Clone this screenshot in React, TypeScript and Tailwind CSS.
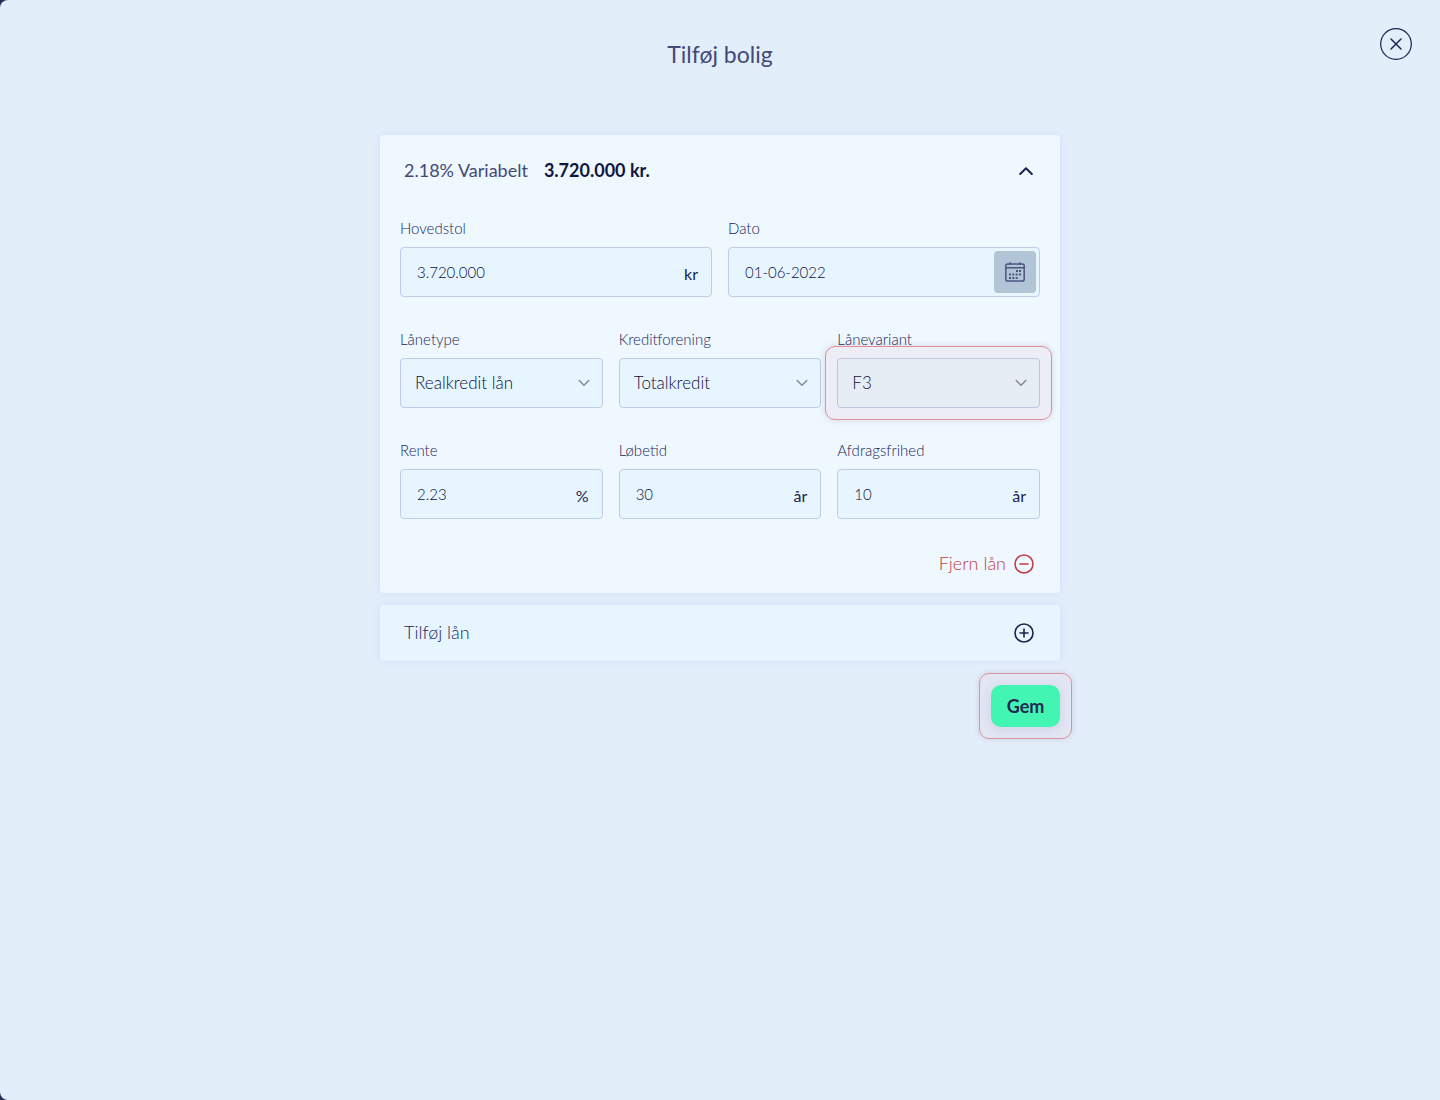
import React, { useState } from 'react';
import { clsx } from 'clsx';

const labelClass = "font-['Lato',sans-serif] text-[15px] leading-[22px] font-light text-[#20275a]";
const boxClass = 'flex h-[50px] w-full items-center rounded border border-[#bfcbe8]';

interface TextFieldProps {
  id: string;
  label: string;
  defaultValue: string;
  suffix?: string;
  children?: React.ReactNode;
}

const TextField = ({ id, label, defaultValue, suffix, children }: TextFieldProps) => {
  return (
    <div className="flex min-w-0 flex-col gap-2">
      <label htmlFor={id} className={labelClass}>{label}</label>
      <div className={clsx(boxClass, 'bg-[#e7f5ff]')}>
        <input
          id={id}
          type="text"
          defaultValue={defaultValue}
          className="h-full min-w-0 flex-1 bg-transparent pl-4 text-[15px] font-light text-[#0a1040] outline-none"
        />
        {suffix && <span className="pt-1 pr-[13px] text-base">{suffix}</span>}
        {children}
      </div>
    </div>
  );
};

interface SelectFieldProps {
  id: string;
  label: string;
  options: string[];
  highlighted?: boolean;
}

const SelectField = ({ id, label, options, highlighted }: SelectFieldProps) => {
  return (
    <div className="flex min-w-0 flex-col gap-2">
      <label htmlFor={id} className={labelClass}>{label}</label>
      <div className="relative">
        <select
          id={id}
          className={clsx(
            boxClass,
            'appearance-none pr-10 pl-3.5 text-[17px] font-light text-[#0a1040] outline-none',
            highlighted ? 'bg-[#e7f7fd]' : 'bg-[#e7f5ff]'
          )}
        >
          {options.map((option) => (
            <option key={option}>{option}</option>
          ))}
        </select>
        <svg
          className="pointer-events-none absolute inset-y-0 right-[13px] my-auto h-3 w-3 text-[#858b99]"
          viewBox="0 0 12 12"
          fill="none"
          stroke="currentColor"
          strokeWidth={1.5}
          strokeLinecap="round"
          strokeLinejoin="round"
        >
          <path d="M1.2 3.5 6 8.3l4.8-4.8" />
        </svg>
        {highlighted && (
          <div className="pointer-events-none absolute -inset-3 rounded-[10px] border border-[#de8f98] bg-[#e05050]/6 shadow-[0_0_6px_rgba(110,80,130,0.2)]" />
        )}
      </div>
    </div>
  );
};

const CalendarIcon = () => (
  <svg className="h-5 w-5" viewBox="0 0 20 20" fill="none" stroke="currentColor" strokeWidth={1.5}>
    <rect x="0.8" y="2" width="18.4" height="17" rx="1.8" />
    <path d="M.8 5.8h18.4M5 .2V3M15 .2V3" />
    <g fill="currentColor" stroke="none">
      <path d="M11 8h2v2h-2zM14 8h2v2h-2z" />
      <path d="M4 11.5h2v2H4zM7.3 11.5h2v2h-2zM10.7 11.5h2v2h-2zM14 11.5h2v2h-2z" />
      <path d="M4 15h2v2H4zM7.3 15h2v2h-2zM10.7 15h2v2h-2z" />
    </g>
  </svg>
);

const App = () => {
  const [open, setOpen] = useState(true);

  return (
    <div className="min-h-screen bg-[#252b60] font-['Lato',sans-serif] text-[#1c2250]">
      <div className="min-h-screen rounded-l-lg bg-[#e3eefb] pb-10">
        <header className="grid grid-cols-[1fr_auto_1fr] items-start px-7 pt-7">
          <h1 className="col-start-2 pt-2.5 text-[23px] leading-8 text-[#434a77]">Tilføj bolig</h1>
          <button type="button" aria-label="Luk" className="justify-self-end">
            <svg className="h-8 w-8" viewBox="0 0 32 32" fill="none" stroke="currentColor">
              <circle cx="16" cy="16" r="15.3" strokeWidth={1.2} />
              <path d="m11 11 10 10m0-10L11 21" strokeWidth={1.5} strokeLinecap="round" />
            </svg>
          </button>
        </header>

        <main className="mx-auto mt-[65px] flex w-full max-w-[680px] flex-col">
          <section className="rounded bg-[#eff7ff] px-5 pt-5 pb-[17px] shadow-[0_0_6px_rgba(150,180,235,0.25)]">
            <div className="flex h-8 items-center pr-[7px] pl-1">
              <h2 className="flex flex-1 items-center gap-4 pb-0.5 text-lg">
                <span className="text-[#434a77]">2.18% Variabelt</span>
                <span className="font-bold text-[#10173f]">3.720.000 kr.</span>
              </h2>
              <button type="button" aria-label="Vis eller skjul lån" aria-expanded={open} onClick={() => setOpen(!open)}>
                <svg
                  className={clsx('h-3.5 w-3.5', !open && 'rotate-180')}
                  viewBox="0 0 14 14"
                  fill="none"
                  stroke="currentColor"
                  strokeWidth={2}
                  strokeLinecap="round"
                  strokeLinejoin="round"
                >
                  <path d="m1.2 10 5.8-5.8 5.8 5.8" />
                </svg>
              </button>
            </div>

            {open && (
              <form className="mt-[30px] flex flex-col gap-[31px]">
                <div className="grid grid-cols-2 gap-4">
                  <TextField id="hovedstol" label="Hovedstol" defaultValue="3.720.000" suffix="kr" />
                  <TextField id="dato" label="Dato" defaultValue="01-06-2022">
                    <button
                      type="button"
                      aria-label="Vælg dato"
                      className="mr-[3px] flex h-[42px] w-[42px] items-center justify-center rounded bg-[#b2c5d6] text-[#4c5581]"
                    >
                      <CalendarIcon />
                    </button>
                  </TextField>
                </div>
                <div className="grid grid-cols-3 gap-4">
                  <SelectField id="laanetype" label="Lånetype" options={['Realkredit lån', 'Banklån']} />
                  <SelectField id="kreditforening" label="Kreditforening" options={['Totalkredit', 'Nordea Kredit']} />
                  <SelectField id="laanevariant" label="Lånevariant" options={['F3', 'F5']} highlighted />
                </div>
                <div className="grid grid-cols-3 gap-4">
                  <TextField id="rente" label="Rente" defaultValue="2.23" suffix="%" />
                  <TextField id="loebetid" label="Løbetid" defaultValue="30" suffix="år" />
                  <TextField id="afdragsfrihed" label="Afdragsfrihed" defaultValue="10" suffix="år" />
                </div>
                <button
                  type="button"
                  className="mt-0.5 mr-1.5 flex items-center gap-2 self-end text-lg leading-6 font-light text-[#c43c42]"
                >
                  <span className="-mt-0.5">Fjern lån</span>
                  <svg className="my-0.5 h-5 w-5" viewBox="0 0 20 20" fill="none" stroke="currentColor" strokeWidth={1.6}>
                    <circle cx="10" cy="10" r="9" />
                    <path d="M6 10h8" strokeLinecap="round" />
                  </svg>
                </button>
              </form>
            )}
          </section>

          <button
            type="button"
            className="mt-3 flex h-14 items-center justify-between rounded bg-[#e7f5ff] pr-[26px] pl-6 text-lg font-light shadow-[0_0_6px_rgba(150,180,235,0.25)]"
          >
            <span className="pb-0.5 text-[#20275a]">Tilføj lån</span>
            <svg className="h-5 w-5" viewBox="0 0 20 20" fill="none" stroke="currentColor" strokeWidth={1.6}>
              <circle cx="10" cy="10" r="9" />
              <path d="M6 10h8M10 6v8" strokeLinecap="round" />
            </svg>
          </button>

          <div className="relative mt-6 self-end">
            <div className="pointer-events-none absolute -inset-3 rounded-[10px] border border-[#dc9299] bg-[#e05060]/6 shadow-[0_0_6px_rgba(110,80,130,0.2)]" />
            <button
              type="submit"
              className="relative h-[42px] w-[69px] rounded-[10px] bg-[#42f5b3] text-lg font-bold text-[#232a50] shadow-[0_2px_10px_rgba(90,110,180,0.15)]"
            >
              Gem
            </button>
          </div>
        </main>
      </div>
    </div>
  );
};

export default App;
